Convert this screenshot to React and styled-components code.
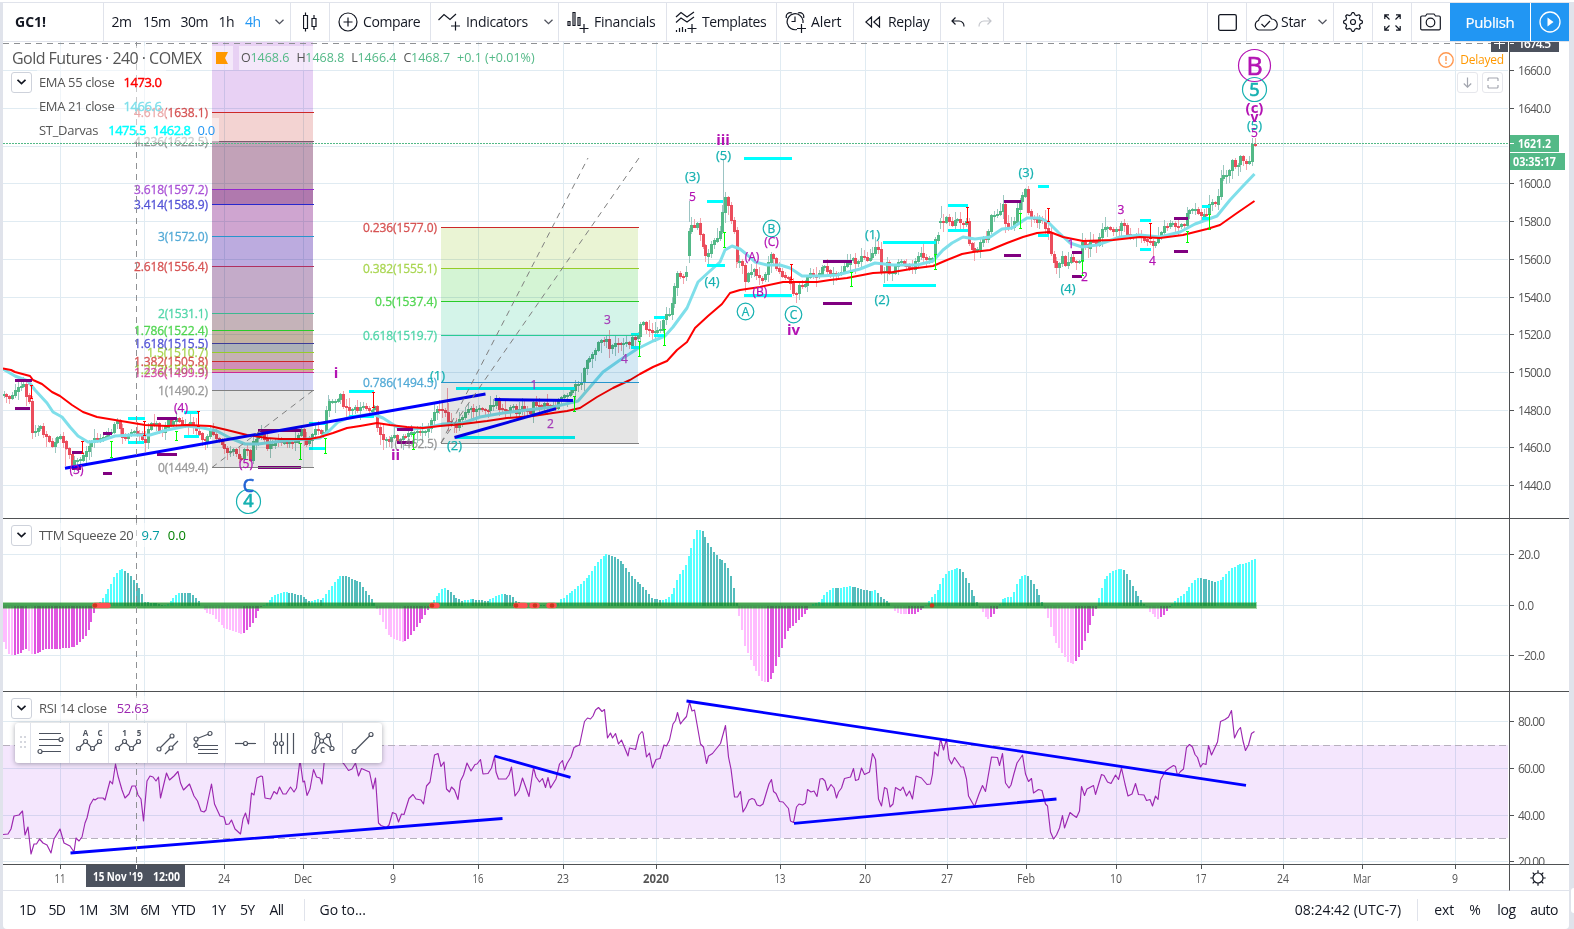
import React from "react";
import styled, { createGlobalStyle } from "styled-components";

const GlobalStyle = createGlobalStyle`
  body {
    margin: 0;
    background: #fff;
    font-family: "Open Sans", sans-serif;
    color: #131722;
    overflow: hidden;
  }
  * { box-sizing: border-box; }
`;

/* ---------- layout ---------- */

const Page = styled.div`
  width: 1574px;
  height: 929px;
  padding-top: 2px;
  background: #e0e3eb;
  display: flex;
  box-shadow: inset 0 2px 0 #fff;
`;
const Main = styled.div`
  width: 1566px;
  margin: 1px 0 0 3px;
  background: #fff;
  border-radius: 0 0 4px 4px;
  display: flex;
  flex-direction: column;
`;
const SideRail = styled.div`
  width: 5px;
  display: flex;
  align-items: flex-end;
  padding: 0 0 16px 2px;
`;
const RailTab = styled.div`
  width: 3px;
  height: 25px;
  background: #fff;
  border-radius: 4px 0 0 4px;
`;
const Toolbar = styled.div`
  height: 39px;
  flex: none;
  display: flex;
  border-bottom: 1px solid #e0e3eb;
`;
const Cell = styled.div`
  width: ${(p) => p.w}px;
  padding-left: ${(p) => p.pl || 0}px;
  display: flex;
  align-items: center;
  gap: ${(p) => p.gap || 0}px;
  border-right: ${(p) => (p.left ? "none" : "1px solid #e0e3eb")};
  border-left: ${(p) => (p.left ? "1px solid #e0e3eb" : "none")};
  svg { flex: none; }
`;
const Label = styled.span`
  font-size: 14px;
  line-height: 20px;
  white-space: nowrap;
  width: ${(p) => (p.w ? p.w + "px" : "auto")};
  letter-spacing: ${(p) => p.ls || 0}px;
  font-weight: ${(p) => (p.bold ? 700 : 400)};
  color: ${(p) => p.color || "#131722"};
`;
const Spacer = styled.div`
  flex: 1;
`;
const Publish = styled.div`
  width: 80px;
  background: #2196f3;
  color: #fff;
  font-size: 15px;
  letter-spacing: -0.35px;
  display: flex;
  align-items: center;
  justify-content: center;
  height: 38px;
  -webkit-text-stroke: 0.2px #fff;
`;
const Play = styled(Publish)`
  width: 39px;
  border-left: 1px solid #fff;
`;

const Chart = styled.div`
  position: relative;
  flex: none;
  display: grid;
  grid-template-columns: 1506px 60px;
  grid-template-rows: 477px 173px 173px 26px;
`;
const Pane = styled.div`
  border-bottom: 1px solid ${(p) => (p.light ? "#e0e3eb" : "#4f5153")};
  overflow: hidden;
  svg { display: block; }
`;
const AxisPane = styled(Pane)`
  border-left: 1px solid #4f5153;
  display: ${(p) => (p.center ? "flex" : "block")};
  align-items: center;
  justify-content: center;
  padding-right: ${(p) => (p.center ? 3 : 0)}px;
`;

const Legend = styled.div`
  position: absolute;
  left: 8px;
  top: ${(p) => p.top}px;
  display: flex;
  flex-direction: column;
  align-items: flex-start;
`;
const LegendRow = styled.div`
  height: 24px;
  display: flex;
  align-items: center;
  color: #555;
  font-size: 13px;
  white-space: nowrap;
`;
const LegendText = styled.div`
  height: 24px;
  line-height: 24px;
  padding: 0 4px 0 2px;
  margin-left: ${(p) => p.ml || 0}px;
  font-size: ${(p) => p.size || 13}px;
  background: rgba(255, 255, 255, 0.5);
  display: flex;
  gap: ${(p) => p.gap || 9}px;
  letter-spacing: ${(p) => p.ls || 0}px;
`;
const Title = styled.span`
  font-size: 16px;
  width: 195px;
  margin-left: -1px;
  letter-spacing: -0.54px;
`;
const Val = styled.span`
  color: ${(p) => p.c};
  -webkit-text-stroke: ${(p) => (p.strong ? "0.4px" : "0")};
  letter-spacing: ${(p) => p.ls || 0}px;
`;
const SquareButton = styled.div`
  width: 21px;
  height: 21px;
  border: 1px solid ${(p) => (p.faint ? "#e6e7ec" : "#ced2db")};
  border-radius: 3px;
  background: #fff;
  display: flex;
  align-items: center;
  justify-content: center;
`;
const Status = styled.div`
  position: absolute;
  top: 8px;
  right: 65px;
  display: flex;
  flex-direction: column;
  align-items: flex-end;
  gap: 2px;
`;
const StatusRow = styled.div`
  display: flex;
  align-items: center;
  gap: ${(p) => p.gap}px;
  color: #ff9800;
  font-size: 12px;
  letter-spacing: -0.2px;
  line-height: 20px;
  padding-right: ${(p) => p.pr || 0}px;
`;

const DrawBar = styled.div`
  position: absolute;
  left: 12px;
  top: 681px;
  width: 367px;
  height: 40px;
  background: #fff;
  border-radius: 3px;
  box-shadow: 0 1px 5px rgba(60, 64, 80, 0.45);
  display: flex;
`;
const Tool = styled.div`
  width: ${(p) => (p.first ? 16 : 39)}px;
  border-right: ${(p) => (p.last ? "none" : "1px solid #e0e3eb")};
  display: flex;
  align-items: center;
  justify-content: center;
`;
const Footer = styled.div`
  height: 38px;
  display: flex;
  align-items: center;
  padding-left: 16px;
  padding-right: 11px;
`;
const Rule = styled.div`
  width: 1px;
  height: 22px;
  background: #e0e3eb;
  margin: ${(p) => p.m};
`;

/* ---------- data ---------- */

const PRICE = [
  3,397,10,397,13,394,16,387,19,388,22,385,25,385,27,404,29,401,31,436,34,431,37,430,40,426,43,434,46,435,49,442,52,447,
  55,441,58,436,61,435,64,446,67,451,70,460,73,464,76,457,79,464,82,457,85,453,88,446,91,443,94,439,97,440,100,439,105,439,
  108,435,111,432,115,421,119,425,122,436,125,439,129,433,134,431,138,433,142,436,144,451,147,432,150,424,156,425,159,428,
  161,437,165,425,168,419,171,425,175,417,178,418,181,425,186,426,190,420,194,428,198,434,202,441,207,439,211,427,214,436,
  218,439,222,444,226,451,232,449,236,456,240,460,244,452,247,451,250,459,252,444,256,438,260,433,263,437,266,447,272,446,
  276,441,280,444,285,441,290,444,296,441,300,428,304,440,308,444,312,435,314,428,318,432,323,436,325,417,328,402,333,402,
  341,396,343,407,350,412,353,408,358,411,363,407,368,411,375,408,378,433,383,438,388,441,392,435,397,440,403,438,408,436,
  412,430,416,432,423,432,428,427,433,417,435,411,445,411,447,423,453,427,457,425,462,418,467,408,473,412,480,407,487,410,
  493,405,496,400,498,408,507,411,512,405,515,413,523,407,530,413,533,402,538,406,550,405,555,408,558,400,567,397,570,392,
  575,385,582,382,585,363,590,358,595,350,598,342,607,340,608,348,617,342,622,343,628,345,632,339,637,338,640,327,643,323,
  648,332,653,334,657,330,661,328,664,317,670,312,673,293,677,275,682,280,687,270,689,221,695,228,697,222,701,242,707,258,
  710,247,720,232,723,207,726,194,730,217,734,232,736,264,742,257,743,287,748,273,753,270,758,280,764,278,768,263,772,253,
  775,265,780,274,787,277,790,279,791,293,795,297,798,285,805,285,808,274,817,277,822,265,830,272,837,277,843,270,847,264,
  853,258,857,264,863,256,867,260,872,256,874,245,878,248,879,270,882,275,887,262,890,277,896,263,903,263,907,267,913,270,
  916,254,923,255,927,260,932,258,935,237,938,237,941,218,944,226,947,213,951,227,955,219,962,225,966,220,968,243,975,252,
  982,238,987,242,989,228,992,213,998,217,1003,205,1006,227,1012,229,1016,212,1022,197,1025,187,1027,208,1035,223,1042,218,
  1045,230,1049,232,1051,257,1055,267,1060,262,1063,253,1065,267,1070,258,1077,263,1080,260,1082,239,1087,247,1092,240,
  1097,246,1102,228,1110,230,1114,233,1118,230,1123,222,1128,237,1133,238,1137,232,1141,238,1147,240,1153,245,1158,240,
  1163,227,1170,223,1178,227,1185,224,1187,210,1195,210,1202,215,1207,213,1209,203,1215,202,1218,197,1221,178,1228,172,
  1232,159,1236,170,1241,157,1247,166,1250,158,1252,144,1255,144,
];

const EMA55 = [
  3,368.5,11,370,15,372,30,376,33,380,42,384,52,392,60,396,72,405,83,412,97,417,115,420,133,423,145,425,167,426,187,425,
  210,426,227,430,247,435,267,438,280,439,310,439,320,437,333,433,347,428,360,426,377,423,390,425,407,427,423,428,440,426,
  463,424,487,421,507,418,533,416,553,413,567,411,580,408,597,397,613,388,630,380,640,374,653,367,667,361,677,350,687,342,
  695,328,708,316,722,304,730,293,740,290,760,287,783,282,817,282,830,280,847,278,873,273,893,272,917,268,933,266,947,260,
  962,254,973,252,990,250,1007,243,1023,237,1037,233,1050,232,1063,237,1083,241,1113,240,1140,237,1160,238,1183,235,
  1207,229,1220,225,1237,213,1254.5,201,
];

const EMA21 = [
  3,369,15,376,28,381,35,390,47,403,53,412,62,417,70,427,78,436,88,442,100,441,115,436,133,435,150,435,167,430,187,426,
  203,428,217,431,230,438,245,444,258,444,283,441,320,438,330,430,338,422,350,417,373,414,383,418,397,427,413,429,430,427,
  443,424,463,423,480,417,503,413,527,410,553,407,578,401,590,387,603,372,620,360,637,349,653,341,665,336,673,327,687,308,
  698,282,710,271,720,262,725,250,732,246,740,249,745,253,755,262,767,265,780,265,790,268,802,276,820,276,837,275,860,269,
  875,263,893,265,917,265,933,261,943,250,952,243,963,237,975,239,990,237,1002,229,1012,228,1027,218,1040,218,1048,222,
  1058,232,1070,243,1082,247,1097,245,1120,237,1140,235,1160,237,1180,232,1195,224,1217,216,1230,200,1243,186,1254.5,174,
];

// momentum, height in px above (+) or below (-) the zero line
const TTM = [
  3,-35,6,-42,10,-49,14,-49,20,-47,24,-44,28,-43,31,-48,36,-48,40,-46,44,-44,48,-43,58,-43,64,-42,74,-41,78,-38,83,-33,
  87,-28,91,-17,95,-5,99,3,103,8,107,14,111,22,115,31,119,36,122,37,126,35,130,31,135,25,139,19,143,10,145,4,155,3,162,1,
  168,2,173,7,178,13,190,13,194,10,199,5,202,0,207,-7,213,-9,220,-18,226,-23,232,-25,240,-28,244,-27,250,-21,254,-15,
  258,-6,262,0,267,3,272,9,280,13,287,14,295,12,303,10,310,4,318,7,322,6,328,14,334,23,340,30,347,30,354,26,360,24,366,15,
  371,8,376,0,382,-14,388,-29,395,-33,404,-36,408,-33,414,-25,420,-17,426,-8,430,0,436,9,440,14,444,19,450,15,455,9,463,5,
  470,7,478,6,488,5,494,9,502,12,511,11,516,5,524,2,547,1,556,0,560,6,565,9,571,14,580,21,585,26,590,32,598,44,605,52,
  610,51,617,48,623,43,628,36,633,28,640,22,645,17,652,8,660,6,667,7,672,12,678,28,686,42,692,60,697,76,702,76,708,64,
  714,54,720,47,725,44,730,34,735,13,737,0,741,-17,745,-40,752,-57,758,-68,763,-76,767,-77,770,-74,776,-61,781,-45,787,-25,
  795,-18,801,-12,807,-5,810,0,820,5,825,12,832,18,840,18,850,20,855,19,864,16,870,15,876,16,882,8,888,4,892,0,896,-7,
  905,-8,914,-8,920,-5,925,0,930,6,938,17,944,30,950,36,957,38,962,36,969,22,975,8,979,0,985,-10,989,-14,994,-8,999,0,
  1003,8,1012,9,1018,25,1023,31,1028,30,1035,20,1040,10,1044,0,1050,-19,1055,-34,1061,-45,1068,-56,1074,-58,1080,-50,
  1085,-34,1090,-20,1094,-8,1097,0,1099,9,1104,26,1110,33,1120,38,1125,36,1130,26,1136,14,1142,5,1146,0,1150,-6,1158,-13,
  1164,-9,1170,0,1176,6,1184,12,1190,20,1197,28,1202,28,1208,26,1214,24,1220,25,1226,32,1232,38,1240,42,1248,43,1252,46,
  1256,47,
];

const RSI = `3,834.5 8,834 11,829 14,816 19,815 22.5,811 25,835 28,827 31,854 34,844 36.5,844 39.5,839 43,843 47,845 51,853 54,839
60,829 64,843 70,846 74,852 76,838 79,841 82,837 85,823 87,818 90,805 93.5,799 95,800 98,798 103,798 105,800 110,781 112.5,784
115.5,764 118,776 122,790 125,798 129,794 132,786 135.5,786 138,795 141,799 143.5,821 147,781 150,776 153,777 156,781 158.5,777
160.5,798 166.5,773 169.5,780 174,776 178,771.5 180.5,783 183.5,790 189.5,784 194,796 197.5,801 201,811 204,812 206,810
211.5,784 214.5,804 220,816 224,817 226,824.5 229,824 231.5,820 235,829 240.5,834 243,819 245.5,813 248.5,824 251.5,793 254,795
257,778 261,776 262.5,776.5 265,798 270.5,799 274,791.5 277,794 279.5,787 283,794 286,794 290.5,787 294,792 296.5,788 300,760
303,782 304.5,781 307,795.5 310,789 313.5,769.5 316.5,777 320,778 322,784 325,754 330,752 338,758 344,764 348.5,770.5 352,769
355.5,763 358.5,776 361.5,768.5 369.5,772 373,789 375.5,778 378.5,823 381,825.5 386.5,827.5 389,825 392.5,812.5 396,814
398.5,822 401.5,814 404,814.5 409,798.5 413,794.5 416,799 421,800 423.5,804 426.5,786 430,782 434.5,755 438,753.5 441,766.5
444,762 446.5,789 449.5,792 451.5,787 454.5,790 458,799.5 460.5,781 463.5,775 467,763 471,771 475,764.5 477,764 480.5,759.5
483,774 488,773.5 491.5,768 494.5,756.5 496,772 498.5,779 506,779 509,775 511.5,767 515,796 519,790.5 522.5,778 529,796.5
533.5,767.5 536,777 539.5,782 542.5,778.5 545.5,787.5 548,777.5 550.5,788 556,779 559.5,764 562.5,760.5 564.5,770 567,763.5
571,757 574,747.5 577,746 579.5,745 584.5,721.5 587.5,718 590.5,719 593,716 595.5,710 598.5,707.5 602,711.5 604.5,709.5
607.5,738 610.5,733 612.5,738 615.5,733.5 618.5,744 621.5,740 628,756 629.5,748 635.5,749.5 639,735 642,731.5 643,733
646.5,757 649.5,753 652.5,768 656,759.5 660,758.5 664,745 666.5,746 669.5,740 673,724 675.5,720.5 677.5,712.5 680.5,724
683,720.5 686.5,716.5 689.5,702 692,711 694.5,710 700.5,744 703.5,747 706.5,763.5 708.5,756 712.5,753.5 720.5,743.5
725.5,725.5 728.5,757 731,769 734.5,797 737.5,797 740.5,791.5 743,812 746,807 749,800 752,798.5 754.5,799.5 757,805 760,806
763,804 766,794 769,784 771.5,779.5 773.5,791.5 776,793.5 779.5,801.5 783,802 788.5,808.5 790.5,821 793.5,822.5 796.5,807
799,804 802.5,805 805.5,803 807.5,789.5 811,792 814,791 817,796.5 820,779 822.5,778.5 825,781 827.5,790.5 831,784.5 834,788
836.5,798 838.5,792 841.5,788 844.5,778.5 850.5,777 853.5,768.5 855.5,780.5 858.5,779.5 861.5,768 864.5,774.5 869.5,772
872.5,753.5 875.5,759.5 878.5,799 881.5,806 884.5,787.5 887,789 890,807 893,804 895.5,787.5 900.5,790.5 903,787 906.5,796
909.5,791 912.5,799 916,776 921.5,778 927,784.5 930.5,784 932.5,774 934.5,752 938,756 940.5,738.5 943.5,750 946.5,739 949,759
951.5,764 954.5,757.5 961,767 963.5,767 966.5,779 968.5,796 974.5,806.5 979,794 982.5,785.5 985.5,791.5 991.5,757 997.5,757.5
999.5,765.5 1002.5,753.5 1005.5,783 1009,788 1011,785 1014,773.5 1017,763 1022.5,755 1025.5,774 1028.5,781.5 1031.5,778.5
1033.5,793 1038.5,789.5 1042,790.5 1045.5,804 1047.5,806 1050.5,832 1053.5,839 1056.5,835 1059.5,828 1062.5,815.5 1064.5,828
1070,812.5 1073,815 1076.5,817.5 1079.5,811 1081.5,786.5 1084.5,795.5 1087,789 1093.5,785.5 1095.5,794.5 1101.5,774.5
1104,775.5 1107.5,782 1111,783.5 1115.5,775 1118.5,779.5 1121.5,768 1125,784 1128,796 1132,794 1135.5,783.5 1138.5,794.5
1144,795 1146.5,800.5 1150,799.5 1152.5,806 1155.5,796 1158,799.5 1160.5,780 1165.5,771 1169.5,768 1173.5,765.5 1175.5,766.5
1177.5,775.5 1180.5,771.5 1183.5,769 1186.5,747.5 1189.5,744.5 1192.5,747 1195,754.5 1197.5,757.5 1200.5,767 1203,763.5
1206,764.5 1208.5,745.5 1211.5,755 1217.5,742 1220.5,721.5 1225,719.5 1228.5,717 1231.5,710.5 1234.5,738 1238,730.5
1240.5,727.5 1243,741 1245.5,750.5 1248.5,745 1251.5,733.5 1254.5,731.5`;

const GRID_X = [60, 144, 224, 303, 393, 478, 563, 656, 780, 865, 947, 1026, 1116, 1201, 1283, 1362, 1455];
const GRID_Y = [70, 108, 146, 183, 221, 259, 297, 334, 372, 410, 447, 485];

const TIMES = [
  [60, "11", 11], [224, "24", 12], [303, "Dec", 18], [393, "9", 6], [478, "16", 11], [563, "23", 12],
  [656, "2020", 26, true], [780, "13", 11], [865, "20", 12], [947, "27", 12], [1026, "Feb", 18], [1116, "10", 12],
  [1201, "17", 11], [1283, "24", 12], [1362, "Mar", 18], [1455, "9", 6],
];

// x1, x2, y
const CYAN_BOXES = [
  [128, 145, 418], [128, 144, 442], [184, 199, 412], [184, 199, 436], [309, 326, 423], [309, 326, 448], [349, 374, 391],
  [349, 374, 416], [456, 575, 388], [456, 575, 437], [631, 639, 334], [631, 639, 347], [654, 665, 317], [654, 665, 335],
  [707, 723, 201], [707, 725, 265], [744, 792, 158], [744, 792, 295], [883, 936, 242], [883, 936, 285], [948, 968, 205],
  [948, 968, 230], [1038, 1049, 186], [1038, 1049, 235], [1140, 1151, 220], [1140, 1151, 249], [1202, 1210, 206],
  [1202, 1210, 218],
];
const PURPLE_BOXES = [
  [15, 32, 380], [15, 30, 408], [72, 82, 452], [72, 81, 468], [103, 112, 433], [103, 112, 473], [157, 177, 418],
  [157, 177, 454], [258, 301, 430], [258, 301, 467], [397, 413, 429], [397, 413, 442], [823, 852, 261], [823, 852, 303],
  [1004, 1021, 201], [1004, 1021, 255], [1072, 1082, 252], [1072, 1082, 276], [1174, 1188, 218], [1174, 1188, 251],
];
// x, y1, y2
const RED_MARKS = [
  [31, 385, 398], [82, 441, 453], [144, 421, 435], [198, 411, 426], [373, 392, 407], [791, 264, 279], [967, 207, 222],
  [1048, 208, 221], [1150, 223, 238],
];
const LIME_MARKS = [
  [111, 441, 457], [176, 431, 440], [300, 443, 459], [325, 438, 453], [413, 434, 449], [574, 396, 411], [639, 341, 356],
  [664, 329, 345], [724, 232, 247], [851, 272, 286], [935, 254, 269], [1020, 213, 228], [1082, 260, 275], [1187, 231, 242],
  [1209, 214, 229],
];

const FIB_EXT = [
  [42, 112, "#e8d1f4"], [112, 141, "#f3d3d2"], [141, 189, "#c2a2b8"], [189, 204, "#b079ae"], [204, 236, "#cfa5d0"],
  [236, 266, "#bcabdf"], [266, 313, "#c4abc9"], [313, 330, "#c5b3b9"], [330, 343, "#c4b3a3"], [343, 352, "#acb1b8"],
  [352, 361, "#c5b1b4"], [361, 369, "#d18fb8"], [369, 372, "#d6a6a0"], [372, 390, "#d3d3f4"], [390, 467, "#e4e4e4"],
];
const FIB_EXT_LINES = [
  [112, "4.618(1638.1)", "#cc2828", 74], [141, "4.236(1622.5)", "#808080", 74, "#7c5a6e"],
  [189, "3.618(1597.2)", "#9528cc", 74], [204, "3.414(1588.9)", "#2828cc", 74], [236, "3(1572.0)", "#2895cc", 50],
  [266, "2.618(1556.4)", "#cc2828", 74, "#b03060"], [313, "2(1531.1)", "#28cc95", 50, "#3db890"],
  [330, "1.786(1522.4)", "#28cc28", 74], [343, "1.618(1515.5)", "#2828cc", 74, "#3c3c98"],
  [352, "1.5(1510.7)", "#95cc28", 61], [361, "1.382(1505.8)", "#cc2828", 74], [369, "1.272(1501.3)", "#95cc28", 74],
  [372, "1.236(1499.9)", "#cc2895", 74], [390, "1(1490.2)", "#808080", 50], [467, "0(1449.4)", "#808080", 50],
];
const FIB_RET = [
  [227, 268, "#eaf4d4"], [268, 301, "#d4f4d4"], [301, 335, "#d4f4e9"], [335, 382, "#d4e9f4"], [382, 443, "#e5e5e5"],
];
const FIB_RET_LINES = [
  [227, "0.236(1577.0)", "#cc2828", 74], [268, "0.382(1555.1)", "#95cc28", 74], [301, "0.5(1537.4)", "#28cc28", 62],
  [335, "0.618(1519.7)", "#28cc95", 74], [382, "0.786(1494.5)", "#2895cc", 74], [443, "1(1462.5)", "#808080", 49],
];

const TEAL = "#16b1b1";
const PLUM = "#b313b3";
// text, x, y centre, colour, size, weight
const WAVES = [
  ["iii", 723, 140, PLUM, 15, 700], ["(5)", 723.5, 155, TEAL, 13], ["(3)", 692.5, 176, TEAL, 13], ["5", 692.5, 197, PLUM, 12],
  ["(4)", 712, 281, TEAL, 13], ["(A)", 752, 257, PLUM, 12], ["(B)", 760, 292, PLUM, 12], ["(C)", 771.5, 242, PLUM, 12],
  ["iv", 793.5, 330, PLUM, 15, 700], ["(1)", 872.5, 234, TEAL, 13], ["(2)", 882, 299, TEAL, 13], ["(3)", 1026, 172, TEAL, 13],
  ["(4)", 1068, 288, TEAL, 13], ["3", 1121, 210, PLUM, 12], ["4", 1152.5, 261, PLUM, 12], ["2", 1084.5, 277, PLUM, 12],
  ["1", 1071, 244, PLUM, 12], ["5", 1254.5, 133, PLUM, 12], ["(5)", 1254.5, 125, TEAL, 13], ["v", 1254.5, 117, PLUM, 14, 700],
  ["(c)", 1254.5, 108, PLUM, 15, 700], ["5", 1254.5, 89.5, TEAL, 18], ["B", 1254.5, 65.5, PLUM, 25], ["(4)", 181, 408, PLUM, 12],
  ["(3)", 76.5, 470, PLUM, 12], ["(5)", 246, 464, PLUM, 12], ["C", 248.5, 486, "#2062d4", 18], ["4", 248.5, 501, TEAL, 18],
  ["i", 336, 373, PLUM, 15, 700], ["ii", 395.5, 455, PLUM, 15, 700], ["(1)", 437.5, 375, TEAL, 13], ["(2)", 454.5, 445, TEAL, 13],
  ["1", 534, 385, "#a33ab8", 12], ["2", 550.5, 424, "#a33ab8", 12], ["3", 607.5, 320, "#a33ab8", 12],
  ["4", 624.5, 359, "#a33ab8", 12], ["B", 771.5, 228.5, TEAL, 12], ["A", 745.5, 311.5, TEAL, 12], ["C", 793.5, 314.5, TEAL, 12],
];
const RINGS = [
  [1254.5, 65.5, 16, PLUM], [1254.5, 89.5, 12, TEAL], [248.5, 501.5, 12, TEAL], [771.5, 228.5, 8.3, TEAL],
  [745.5, 311.5, 8.3, TEAL], [793.5, 314.5, 8.3, TEAL],
];

const STEP = 2.83;

const valueAt = (pts, x) => {
  let i = 0;
  while (i < pts.length - 4 && pts[i + 2] < x) i += 2;
  const t = Math.max(0, Math.min(1, (x - pts[i]) / (pts[i + 2] - pts[i])));
  return pts[i + 1] + (pts[i + 3] - pts[i + 1]) * t;
};
const noise = (n) => {
  const v = Math.sin(n * 127.1) * 43758.5453;
  return v - Math.floor(v);
};
const toPoints = (a) => {
  const out = [];
  for (let i = 0; i < a.length; i += 2) out.push(a[i] + "," + a[i + 1]);
  return out.join(" ");
};

const xs = [];
for (let x = 1254.5; x > 3; x -= STEP) xs.unshift(x);

const closes = xs.map((x, i) => valueAt(PRICE, x) + (noise(i) - 0.5) * 4);

const candles = xs.map((x, i) => {
  const close = closes[i];
  let open = i ? closes[i - 1] : close;
  // session gaps: the first candle does not touch the one before it
  if (Math.abs(x - 689.5) < 1.4) open = 255;
  if (Math.abs(x - 941) < 1.4) open = 222;
  const top = Math.min(open, close) - 0.6;
  const h = Math.max(2.4, Math.abs(open - close) + 1.2);
  return {
    x: Math.round(x) - 1,
    up: close <= open,
    top: Math.round(top),
    h: Math.round(h),
    hi: Math.round(top - 1 - noise(i + 500) ** 2 * 9),
    lo: Math.round(top + h + 1 + noise(i + 900) ** 2 * 9),
  };
});

/* ---------- icons ---------- */

const Svg = ({ w, h, children, color = "#131722", sw = 1.2 }) => (
  <svg width={w} height={h} viewBox={`0 0 ${w} ${h}`} fill="none" stroke={color} strokeWidth={sw}>
    {children}
  </svg>
);
const Chevron = ({ sw = 1.3, color = "#50535e" }) => (
  <Svg w={9} h={6} sw={sw} color={color}>
    <path d="M.5 .8 4.5 4.6 8.5 .8" />
  </Svg>
);
const CandleIcon = () => (
  <Svg w={14} h={20}>
    <path d="M.5 3.5h4v13h-4zM2.5 .5v3M2.5 16.5v3M9 6.500h4v8H9zM11 3v3.500M11 14.500V18" />
  </Svg>
);
const CompareIcon = () => (
  <Svg w={20} h={20}>
    <circle cx="10" cy="10" r="9" />
    <path d="M10 5.500v9M5.500 10h9" />
  </Svg>
);
const IndicatorsIcon = () => (
  <Svg w={23} h={18}>
    <path d="M.5 7 6 1.500 12 6.500 18 1M13 13h9M17.500 8.500v9" />
  </Svg>
);
const FinancialsIcon = () => (
  <Svg w={22} h={22}>
    <path d="M1 10.500h2v4H1zM6 1.500h2v13H6zM11 6.500h2v8h-2zM12.500 17.500h9M17 13v9" />
  </Svg>
);
const TemplatesIcon = () => (
  <Svg w={22} h={22}>
    <path d="M1 6 6 1.500 12 6 19 1M1 11.500 6 7 12 11 19 6M12.500 17.500h9M17 13v9M1.500 19v2M4.500 17v4M7.500 16v5M10.500 18v3" />
  </Svg>
);
const AlertIcon = () => (
  <Svg w={21} h={22}>
    <path d="M12 18.500A8 8 0 1 1 18 9.500V12M10 5.500v5H6.500M1.500 7A4 4 0 0 1 7 2M13 2a4 4 0 0 1 5.500 5M12 17.500h9M16.500 13v9" />
  </Svg>
);
const ReplayIcon = () => (
  <Svg w={16} h={12}>
    <path d="M6.500 1v10L.8 6zM14.500 1v10L8.800 6z" />
  </Svg>
);
const UndoIcon = ({ flip, color }) => (
  <Svg w={14} h={10} color={color}>
    <path d="M4.500 .5 1 4l3.500 3.500M1 4h7a5 5 0 0 1 5 5.500" transform={flip ? "translate(14 0) scale(-1 1)" : undefined} />
  </Svg>
);
const CloudIcon = () => (
  <Svg w={25} h={17}>
    <path d="M6 16a5 5 0 0 1-.5-9.500A7 7 0 0 1 18.500 5 5.500 5.500 0 0 1 19 16zM8.500 10l3 3 5.500-6" />
  </Svg>
);
const gearPath = () => {
  const pts = [];
  for (let i = 0; i < 32; i++) {
    const a = ((i - 1) / 32) * Math.PI * 2 + Math.PI / 32;
    const r = Math.floor(i / 2) % 2 ? 7.3 : 9.4;
    pts.push((10 + Math.sin(a) * r).toFixed(2) + " " + (10 - Math.cos(a) * r).toFixed(2));
  }
  return "M" + pts.join("L") + "Z";
};
const GearIcon = () => (
  <Svg w={20} h={20}>
    <path d={gearPath()} strokeLinejoin="round" />
    <circle cx="10" cy="10" r="2.500" />
  </Svg>
);
const FullscreenIcon = () => (
  <Svg w={17} h={17}>
    <path d="M.8 5V.8H5M12 .8h4.200V5M16.200 12v4.200H12M5 16.200H.8V12M1 1l4.500 4.500M16 1l-4.500 4.500M16 16l-4.500-4.500M1 16l4.500-4.500" />
  </Svg>
);
const CameraIcon = () => (
  <Svg w={21} h={18}>
    <path d="M2 3h3.500L7 1h7l1.500 2H19a1.300 1.300 0 0 1 1.300 1.300v11A1.300 1.300 0 0 1 19 16.800H2A1.300 1.300 0 0 1 .7 15.300v-11A1.300 1.300 0 0 1 2 3z" />
    <circle cx="10.500" cy="9.500" r="4.300" />
  </Svg>
);
const SunIcon = () => (
  <Svg w={16} h={16}>
    <circle cx="8" cy="8" r="5" />
    <path d="M8 .3v2.700M8 13v2.700M.3 8H3M13 8h2.700M2.700 2.700l1.800 1.800M11.500 11.500l1.800 1.800M13.300 2.700l-1.800 1.800M4.500 11.500l-1.800 1.800" />
  </Svg>
);

const Dots = ({ at }) => at.map(([x, y]) => <circle key={x + "," + y} cx={x} cy={y} r="2" fill="#fff" />);
const zigzag = (a, b) => (
  <>
    <path d="M3.500 19.500 10.500 12.500 17.500 19.500 24.500 12.500" />
    <Dots at={[[3.500, 19.500], [10.500, 12.500], [17.500, 19.500], [24.500, 12.500]]} />
    <text x="10.500" y="6.500" fontSize="8" fontWeight="700" textAnchor="middle" stroke="none" fill="#4c525e">{a}</text>
    <text x="25" y="6.500" fontSize="8" fontWeight="700" textAnchor="middle" stroke="none" fill="#4c525e">{b}</text>
  </>
);
const TOOLS = [
  <><path d="M3 4.500h22M3 10.500h22M3 16.500h22M3 22.500h22" /><Dots at={[[25, 10.500], [4, 22.500]]} /></>,
  zigzag("A", "C"),
  zigzag("1", "5"),
  <><path d="M6 20 19 7M12 25 25 12" /><Dots at={[[6, 20], [19, 7], [18, 19]]} /></>,
  <><path d="M4 10 18 4.500M4 10v6.500M4 16.500h22M6 20.500h20M6 24.500h20" /><Dots at={[[4, 10], [18, 4.500], [4, 16.500]]} /></>,
  <><path d="M4 14.500h21" /><Dots at={[[14.500, 14.500]]} /></>,
  <><path d="M5.500 4v21M11.500 4v21M17.500 4v21M23.500 4v21" /><Dots at={[[5.500, 14.500], [11.500, 14.500]]} /></>,
  <>
    <path d="M5 22.500 8 5.500 12.500 12 19.500 6.500 23 19.500 12.500 12 5 22.500" />
    <Dots at={[[5, 22.500], [8, 5.500], [12.500, 12], [19.500, 6.500], [23, 19.500]]} />
    <text x="13.500" y="24" fontSize="8" fontWeight="700" textAnchor="middle" stroke="none" fill="#4c525e">C</text>
  </>,
  <><path d="M5 22.500 22 5.500" /><Dots at={[[5, 22.500], [22, 5.500]]} /></>,
];

/* ---------- chart panes ---------- */

const Grid = ({ ys, top, bottom }) => (
  <g stroke="#e0ebf2" shapeRendering="crispEdges">
    {GRID_X.map((x) => <path key={x} d={`M${x + 0.5} ${top}V${bottom}`} />)}
    {ys.map((y) => <path key={y} d={`M3 ${y + 0.5}H1508`} />)}
  </g>
);
const CrossV = ({ top, bottom }) => (
  <path d={`M136.500 ${top}V${bottom}`} stroke="#8f9194" strokeDasharray="6 5" shapeRendering="crispEdges" />
);
const HMarks = ({ list, color }) =>
  list.map(([a, b, y]) => <rect key={a + "-" + y} x={a} y={y - 1} width={b - a} height="3" fill={color} />);
const VMarks = ({ list, color }) =>
  list.map(([x, a, b]) => <path key={x} d={`M${x + 0.5} ${a}V${b}M${x - 1} ${a + 0.5}h3M${x - 1} ${b + 0.5}h3`} stroke={color} />);

const FibBands = ({ bands, x, w }) => (
  <g style={{ mixBlendMode: "multiply" }} shapeRendering="crispEdges">
    {bands.map(([a, b, c]) => <rect key={a} x={x} y={a} width={w} height={b - a} fill={c} />)}
  </g>
);
const FibLines = ({ lines, x, w, labelX }) =>
  lines.map(([y, text, color, len, line]) => (
    <g key={y}>
      <path d={`M${x} ${y + 0.5}h${w}`} stroke={line || color} shapeRendering="crispEdges" />
      <text x={labelX - len} y={y + 5} fontSize="12" textLength={len} fill={color} stroke={color} strokeWidth=".3" opacity=".8">
        {text}
      </text>
    </g>
  ));

const PricePlot = () => (
  <svg width="1506" height="476" viewBox="3 42 1506 476" fontFamily='"Open Sans", sans-serif'>
    <Grid ys={GRID_Y} top={42} bottom={518} />
    <g shapeRendering="crispEdges">
      {candles.map((c) => (
        <path key={"w" + c.x} d={`M${c.x + 1.5} ${c.hi}V${c.lo}`} stroke={c.up ? "#9cc8c0" : "#f4a3ad"} />
      ))}
      <path d="M723.500 159V215M689.500 201V222M1022.500 192V200M328.500 395V402M941.500 206V218" stroke="#9cc4c4" />
      <path d="M447.500 388V412M65.500 445V466M28.500 383V385M736.500 230V268" stroke="#f4a3ad" />
      {candles.map((c) => (
        <rect key={c.x} x={c.x} y={c.top} width="3" height={c.h} fill={c.up ? "#53b987" : "#eb4d5c"} />
      ))}
    </g>
    <polyline points={toPoints(EMA21)} fill="none" stroke="#7fdfea" strokeWidth="3" strokeLinejoin="round" />
    <polyline points={toPoints(EMA55)} fill="none" stroke="#ff0000" strokeWidth="2" strokeLinejoin="round" />
    <HMarks list={PURPLE_BOXES} color="#800080" />
    <HMarks list={CYAN_BOXES} color="#00ffff" />
    <g shapeRendering="crispEdges">
      <VMarks list={RED_MARKS} color="#ff0000" />
      <VMarks list={LIME_MARKS} color="#00ff00" />
    </g>
    <g stroke="#0000ff" strokeWidth="3">
      <path d="M65 468.300 485.500 394M494.500 399.600 573 400.600M454.500 437.500 556 408.600" />
    </g>
    <FibBands bands={FIB_EXT} x={212} w={101} />
    <FibLines lines={FIB_EXT_LINES} x={212} w={102} labelX={208} />
    <FibBands bands={FIB_RET} x={441} w={197} />
    <FibLines lines={FIB_RET_LINES} x={441} w={198} labelX={437} />
    <path d="M212 467.500 313 390.500M441 443 588 158M441 443 639 158" stroke="#808080" strokeDasharray="6 5" fill="none" />
    <path d="M3 143.500H1509" stroke="#53b987" strokeDasharray="2 1" shapeRendering="crispEdges" />
    {RINGS.map(([x, y, r, c]) => <circle key={x + "," + y} cx={x} cy={y} r={r} fill="none" stroke={c} strokeWidth="1.200" />)}
    {WAVES.map(([t, x, y, c, size, weight]) => (
      <text
        key={t + x + y}
        x={x}
        y={y + size * 0.36}
        fontSize={size}
        fontWeight={weight || 400}
        fill={c}
        stroke={c}
        strokeWidth={weight ? 0 : size > 14 ? 0.7 : 0.25}
        textAnchor="middle"
      >
        {t}
      </text>
    ))}
    <CrossV top={42} bottom={518} />
    <path d="M3 43.500H1491" stroke="#8f9194" strokeDasharray="6 5" shapeRendering="crispEdges" />
    <rect x="1491" y="42" width="17" height="10" fill="#4c525e" />
    <path d="M1494 43.500h11M1499.500 42v7" stroke="#fff" />
  </svg>
);

const AxisLabels = ({ items, x = 1518 }) =>
  items.map(([y, text, w]) => (
    <g key={y}>
      <path d={`M1510 ${y + 0.5}h4`} stroke="#4f5153" />
      <text x={x} y={y + 5} fontSize="12" fill="#555" textLength={w}>{text}</text>
    </g>
  ));

const PriceAxis = () => (
  <svg width="59" height="476" viewBox="1510 42 59 476">
    <AxisLabels items={GRID_Y.map((y, i) => [y, (1660 - i * 20).toFixed(1), 33]).filter((r) => r[1] !== "1620.0")} />
    <rect x="1510" y="42" width="49" height="10" fill="#4c525e" />
    <path d="M1510 43.500h4" stroke="#fff" />
    <text x="1518" y="48" fontSize="12" fontWeight="600" fill="#fff" textLength="33">1674.5</text>
    <rect x="1510" y="135" width="49" height="17" fill="#53b987" />
    <path d="M1510 143.500h4" stroke="#fff" />
    <text x="1518" y="148" fontSize="12" fontWeight="700" fill="#fff" textLength="33" lengthAdjust="spacingAndGlyphs">1621.2</text>
    <rect x="1510" y="153" width="55" height="17" fill="#53b987" />
    <text x="1513" y="166" fontSize="12" fontWeight="700" fill="#fff" textLength="43" lengthAdjust="spacingAndGlyphs">03:35:17</text>
  </svg>
);

const bars = xs.map((x) => {
  const v = valueAt(TTM, x);
  const prev = valueAt(TTM, x - STEP);
  const color = v >= 0 ? (v > prev ? "#54ffff" : "#55bdbd") : v < prev ? "#ffbcff" : "#e055e0";
  return { x: Math.round(x) - 1, v: Math.round(v), color };
});

const SqueezePlot = () => (
  <svg width="1506" height="172" viewBox="3 519 1506 172">
    <Grid ys={[554, 605, 655]} top={519} bottom={691} />
    <g shapeRendering="crispEdges">
      {bars.map((b) => (
        <rect key={b.x} x={b.x} y={b.v > 0 ? 606 - b.v : 606} width="2" height={Math.abs(b.v)} fill={b.color} />
      ))}
    </g>
    <path d="M3 605.500H1257" stroke="rgba(40,160,40,.4)" strokeWidth="7" />
    <path d="M3 605.500H1256" stroke="rgba(10,130,30,.6)" strokeWidth="5" />
    <path d="M95 605.500h13M432 605.500h5M516 605.500h9M532 605.500h5M549 605.500h5" stroke="#ff5050" strokeWidth="5.500" strokeLinecap="round" />
    <g fill="#c8381c">
      {[95, 432, 516, 535, 552, 932].map((x) => <circle key={x} cx={x} cy="605.500" r="2.300" />)}
    </g>
    <CrossV top={519} bottom={691} />
  </svg>
);

const RsiPlot = () => (
  <svg width="1506" height="172" viewBox="3 692 1506 172">
    <rect x="3" y="745" width="1505" height="93" fill="#f4e6fd" />
    <g style={{ mixBlendMode: "multiply" }}>
      <Grid ys={[721, 768, 815, 861]} top={692} bottom={864} />
    </g>
    <path d="M3 745.500H1508M3 838.500H1508" stroke="#b7b0be" strokeDasharray="7 4" shapeRendering="crispEdges" />
    <polyline points={RSI} fill="none" stroke="#9c27b0" strokeWidth="1.150" strokeLinejoin="round" />
    <path
      d="M70.500 853 502.500 818.500M494.500 756 570.500 777.300M686.500 701 1246 785.300M794 823.300 1056.500 799"
      stroke="#0000ff"
      strokeWidth="2.800"
    />
    <CrossV top={692} bottom={864} />
  </svg>
);

const TimeAxis = () => (
  <svg width="1506" height="25" viewBox="3 865 1506 25">
    {TIMES.map(([x, t, w, bold]) => (
      <g key={x}>
        <path d={`M${x + 0.5} 865v4`} stroke="#4f5153" />
        <text x={x - w / 2} y="883" fontSize="12" fill="#555" fontWeight={bold ? 700 : 400} textLength={w} lengthAdjust="spacingAndGlyphs">
          {t}
        </text>
      </g>
    ))}
    <rect x="86" y="865" width="99" height="22" fill="#4c525e" />
    <path d="M136.500 865v4" stroke="#fff" />
    <text x="93" y="880.500" fontSize="12" fontWeight="700" fill="#fff" textLength="50" lengthAdjust="spacingAndGlyphs">15 Nov '19</text>
    <text x="153" y="880.500" fontSize="12" fontWeight="700" fill="#fff" textLength="27" lengthAdjust="spacingAndGlyphs">12:00</text>
  </svg>
);

/* ---------- bars around the chart ---------- */

const TopBar = () => (
  <Toolbar>
    <Cell w={101} pl={12}><Label bold ls={0}>GC1!</Label></Cell>
    <Cell w={187} pl={7.500}>
      <Label w={31.500} ls={-0.5}>2m</Label>
      <Label w={37.500} ls={-0.5}>15m</Label>
      <Label w={38} ls={-0.5}>30m</Label>
      <Label w={26.500} ls={-0.5}>1h</Label>
      <Label w={29.500} ls={-0.5} color="#2196f3">4h</Label>
      <Chevron />
    </Cell>
    <Cell w={39} pl={12}><CandleIcon /></Cell>
    <Cell w={101} pl={8} gap={5}><CompareIcon /><Label ls={-0.4}>Compare</Label></Cell>
    <Cell w={128} pl={7} gap={5}><IndicatorsIcon /><Label w={73} ls={-0.3}>Indicators</Label><Chevron /></Cell>
    <Cell w={108} pl={8} gap={5}><FinancialsIcon /><Label ls={-0.25}>Financials</Label></Cell>
    <Cell w={110} pl={8} gap={5}><TemplatesIcon /><Label ls={-0.4}>Templates</Label></Cell>
    <Cell w={77} pl={8} gap={5}><AlertIcon /><Label ls={-0.1}>Alert</Label></Cell>
    <Cell w={87} pl={11} gap={7}><ReplayIcon /><Label ls={-0.35}>Replay</Label></Cell>
    <Cell w={63} pl={10} gap={13}><UndoIcon /><UndoIcon flip color="#c3c5cb" /></Cell>
    <Spacer />
    <Cell left w={39} pl={10}>
      <Svg w={19} h={17} sw={1.300}><rect x=".7" y=".7" width="17.600" height="15.600" rx="1.500" /></Svg>
    </Cell>
    <Cell left w={87} pl={6} gap={3}><CloudIcon /><Label w={34} ls={-0.3}>Star</Label><Chevron /></Cell>
    <Cell left w={39} pl={9}><GearIcon /></Cell>
    <Cell left w={39} pl={10.500}><FullscreenIcon /></Cell>
    <Cell left w={39} pl={8}><CameraIcon /></Cell>
    <Publish>Publish</Publish>
    <Play>
      <Svg w={22} h={22} color="#fff" sw={1.300}>
        <circle cx="11" cy="11" r="10" />
        <path d="M8.500 6.500 14.500 11l-6 4.500z" fill="#fff" stroke="none" />
      </Svg>
    </Play>
  </Toolbar>
);

const RANGES = [["1D", 29.5], ["5D", 30], ["1M", 31], ["3M", 31], ["6M", 31], ["YTD", 39.5], ["1Y", 29], ["5Y", 29.5], ["All", 34]];

const BottomBar = () => (
  <Footer>
    {RANGES.map(([t, w]) => <Label key={t} w={w} ls={-0.7}>{t}</Label>)}
    <Rule m="0 15px 0 0" />
    <Label ls={-0.05}>Go to...</Label>
    <Spacer />
    <Label ls={0}>08:24:42 (UTC-7)</Label>
    <Rule m="0 16px" />
    <Label w={35} ls={-0.1}>ext</Label>
    <Label w={28} ls={-0.3}>%</Label>
    <Label w={33} ls={-0.3}>log</Label>
    <Label ls={-0.5}>auto</Label>
  </Footer>
);

const Collapse = () => (
  <SquareButton><Chevron sw={1.700} color="#131722" /></SquareButton>
);

const Overlays = () => (
  <>
    <Legend top={4}>
      <LegendRow>
        <LegendText>
          <Title>Gold Futures · 240 · COMEX</Title>
          <svg width="13" height="24" viewBox="0 0 13 24"><path d="M0 6h12l-3 6 3 6H0z" fill="#ff9800" /></svg>
        </LegendText>
        <LegendText ml={6} gap={7} size={12.5} ls={-0.36}>
          {[["O", "1468.6"], ["H", "1468.8"], ["L", "1466.4"], ["C", "1468.7"]].map(([k, v]) => (
            <span key={k}>{k}<Val c="#53b987">{v}</Val></span>
          ))}
          <Val c="#53b987">+0.1 (+0.01%)</Val>
        </LegendText>
      </LegendRow>
      <LegendRow>
        <Collapse />
        <LegendText ml={5} ls={-0.35}>EMA 55 close<Val c="#ff0000" strong ls={-0.4}>1473.0</Val></LegendText>
      </LegendRow>
      <LegendRow>
        <LegendText ml={26} ls={-0.35}>EMA 21 close<Val c="#7fdfea" strong ls={-0.4}>1466.6</Val></LegendText>
      </LegendRow>
      <LegendRow>
        <LegendText ml={26} gap={7} ls={-0.3}>
          <span>ST_Darvas&nbsp;</span>
          <Val c="#00ffff" strong ls={-0.5}>1475.5</Val>
          <Val c="#00ffff" strong ls={-0.5}>1462.8</Val>
          <Val c="#2196f3" ls={-0.3}>0.0</Val>
        </LegendText>
      </LegendRow>
    </Legend>
    <Legend top={481}>
      <LegendRow>
        <Collapse />
        <LegendText ml={5} gap={8} ls={-0.3}>TTM Squeeze 20<Val c="#009ba0">9.7</Val><Val c="#008000">0.0</Val></LegendText>
      </LegendRow>
    </Legend>
    <Legend top={654}>
      <LegendRow>
        <Collapse />
        <LegendText ml={5} gap={10} ls={-0.3}>RSI 14 close<Val c="#9c27b0" ls={-0.2}>52.63</Val></LegendText>
      </LegendRow>
    </Legend>
    <Status>
      <StatusRow gap={6}>
        <Svg w={16} h={16} color="#ff9850" sw={1.400}>
          <circle cx="8" cy="8" r="7.200" />
          <path d="M8 4v5M8 10.500v1.500" />
        </Svg>
        Delayed
      </StatusRow>
      <StatusRow gap={4} pr={1}>
        <SquareButton faint>
          <Svg w={9} h={11} color="#a3a6af"><path d="M4.500 .5v9.500M.8 6.500l3.700 3.700 3.700-3.700" /></Svg>
        </SquareButton>
        <SquareButton faint>
          <Svg w={12} h={12} color="#a3a6af"><path d="M1 4V1.700L1.700 1h8.600l.7.700V4M1 8v2.300l.7.700h8.600l.7-.7V8" /></Svg>
        </SquareButton>
      </StatusRow>
    </Status>
    <DrawBar>
      <Tool first>
        <svg width="8" height="14" fill="#d5d7de">
          {[0, 5, 10].map((y) => [0, 4].map((x) => <rect key={x + "" + y} x={x + 1} y={y} width="2" height="2" />))}
        </svg>
      </Tool>
      {TOOLS.map((icon, i) => (
        <Tool key={i} last={i === TOOLS.length - 1}>
          <Svg w={28} h={28} color="#4c525e">{icon}</Svg>
        </Tool>
      ))}
    </DrawBar>
  </>
);

export default function App() {
  return (
    <Page>
      <GlobalStyle />
      <Main>
        <TopBar />
        <Chart>
          <Pane><PricePlot /></Pane>
          <AxisPane><PriceAxis /></AxisPane>
          <Pane><SqueezePlot /></Pane>
          <AxisPane>
            <svg width="59" height="172" viewBox="1510 519 59 172">
              <AxisLabels items={[[554, "20.0", 22], [605, "0.0", 16], [655, "−20.0", 27]]} />
            </svg>
          </AxisPane>
          <Pane><RsiPlot /></Pane>
          <AxisPane>
            <svg width="59" height="172" viewBox="1510 692 59 172">
              <AxisLabels items={[[721, "80.00", 27], [768, "60.00", 27], [815, "40.00", 27], [861, "20.00", 27]]} />
            </svg>
          </AxisPane>
          <Pane light><TimeAxis /></Pane>
          <AxisPane light center><SunIcon /></AxisPane>
          <Overlays />
        </Chart>
        <BottomBar />
      </Main>
      <SideRail><RailTab /></SideRail>
    </Page>
  );
}
